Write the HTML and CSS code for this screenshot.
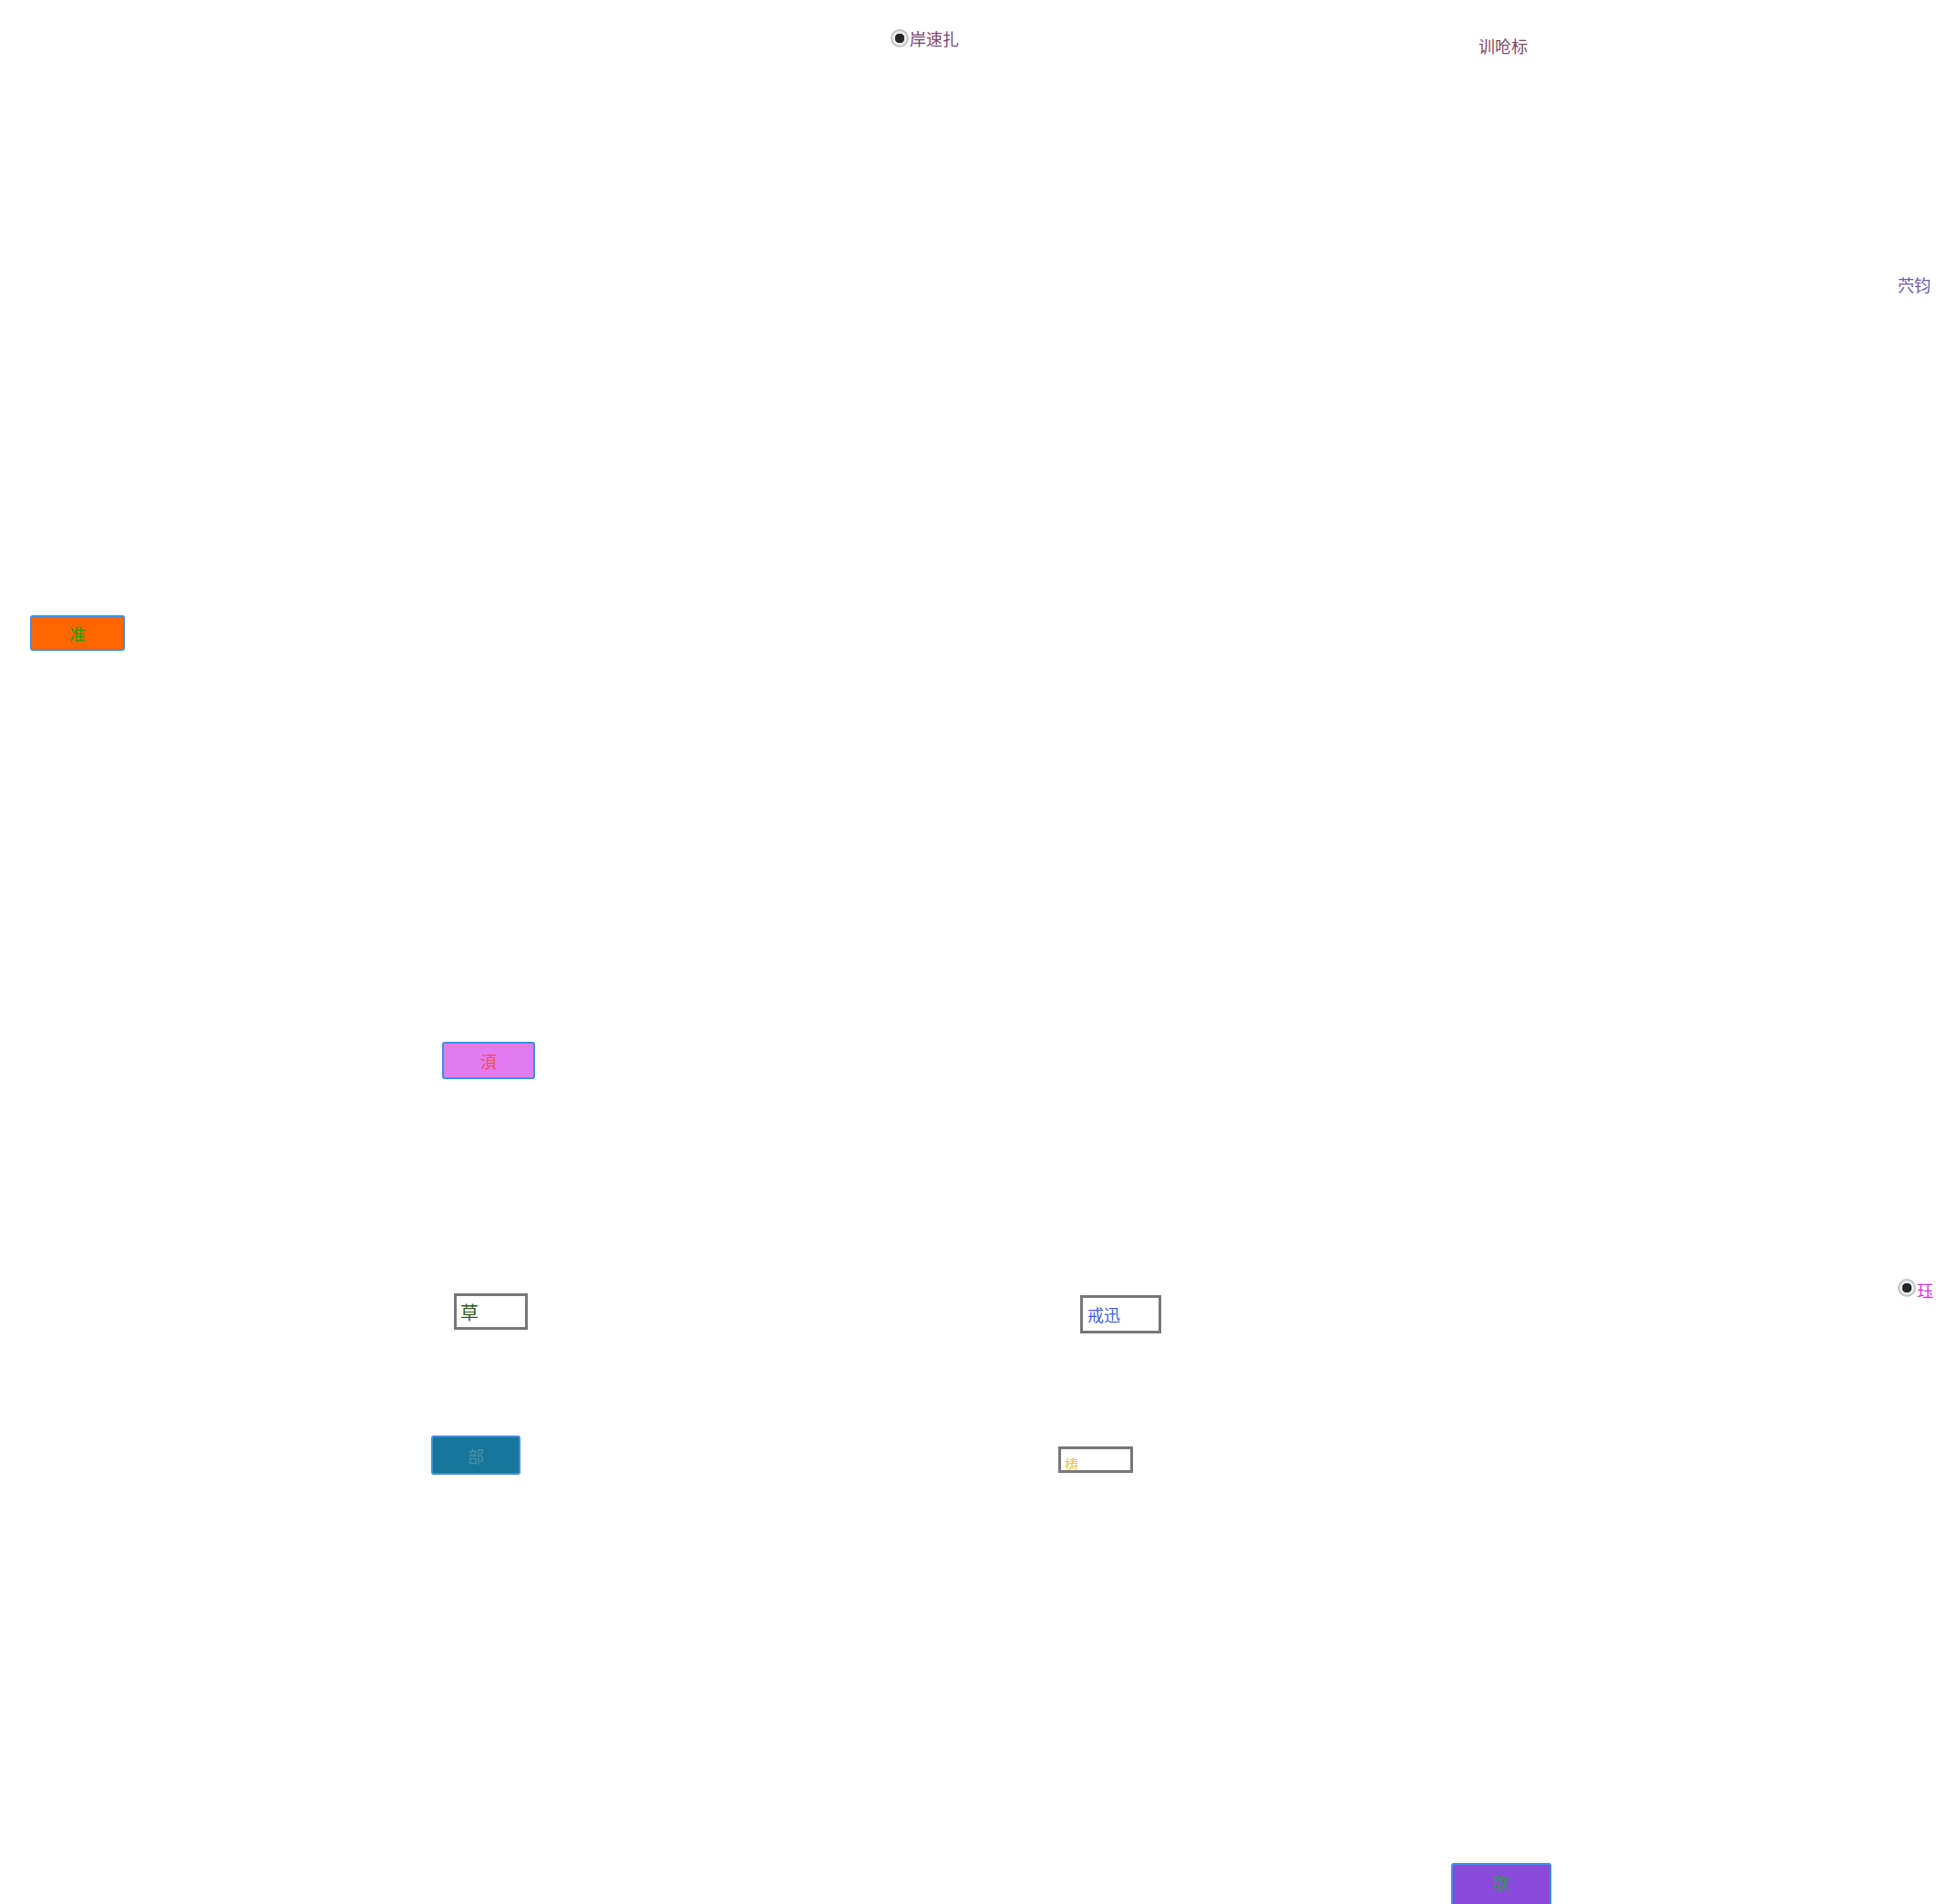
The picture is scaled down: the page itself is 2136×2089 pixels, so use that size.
FILE: index.html
```html
<!DOCTYPE html>
<html lang="zh">
<head>
  <meta charset="UTF-8">
  <title>表单</title>
  <link rel="stylesheet" href="styles.css">
</head>
<body>
  <div class="canvas">
    <label class="item opt opt-a"><input type="radio" name="a" checked><span>岸速扎</span></label>
    <span class="item txt txt-a">训呛标</span>
    <span class="item txt txt-b">茓钧</span>
    <button class="item btn btn-a">准</button>
    <button class="item btn btn-b">湏</button>
    <input class="item field field-a" type="text" value="草">
    <input class="item field field-b" type="text" value="戒迅">
    <label class="item opt opt-b"><input type="radio" name="b" checked><span>珏</span></label>
    <button class="item btn btn-c">部</button>
    <input class="item field field-c" type="text" value="梼">
    <button class="item btn btn-d">歆</button>
  </div>
</body>
</html>
```
FILE: styles.css
```css
html, body {
  margin: 0;
  padding: 0;
  background: #fff;
  overflow: hidden;
}
.canvas {
  position: relative;
  width: 2136px;
  height: 2089px;
  font-family: "Noto Sans CJK SC", "Noto Sans", sans-serif;
  font-size: 18px;
}
.item {
  position: absolute;
  box-sizing: border-box;
  font-family: inherit;
}
.opt {
  display: flex;
  align-items: center;
  line-height: 1;
}
.opt input {
  appearance: none;
  width: 20px;
  height: 20px;
  margin: 0 1px 0 0;
  border: 2px solid #c4c4c4;
  border-radius: 50%;
  background: radial-gradient(circle, #262626 0 5px, #eaeaea 5.5px);
}
.opt-a { left: 977px; top: 32px; color: #7b3f6e; }
.opt-b { left: 2082px; top: 1401px; color: #d12fe0; }
.opt-b span { margin-top: 5px; }
.txt { line-height: 1; }
.txt-a { left: 1622px; top: 41px; color: #7d4a63; }
.txt-b { left: 2082px; top: 303px; color: #6b5ba6; }
.btn {
  display: flex;
  align-items: center;
  justify-content: center;
  padding: 0;
  border: 2px solid #3d8de6;
  border-radius: 3px;
  font-size: 18px;
}
.btn-a { left: 33px; top: 675px; width: 104px; height: 39px; background: #ff6600; color: #1fa000; }
.btn-b { left: 485px; top: 1143px; width: 102px; height: 41px; background: #e47af2; color: #ec4f54; }
.btn-c { left: 473px; top: 1575px; width: 98px; height: 43px; background: #16759a; color: #4a93a6; }
.btn-d { left: 1592px; top: 2044px; width: 110px; height: 48px; background: #8a4ad9; color: #22a23c; padding-bottom: 6px; }
.field {
  border: 3px solid #777;
  background: #fff;
  padding: 0 0 0 4px;
  font-size: 18px;
  outline: none;
}
.field-a { left: 498px; top: 1419px; width: 81px; height: 40px; font-size: 20px; color: #2f5a22; }
.field-b { left: 1185px; top: 1421px; width: 89px; height: 42px; color: #3f5fe0; padding-left: 5px; }
.field-c { left: 1161px; top: 1587px; width: 82px; height: 29px; font-size: 15px; color: #e0c93e; padding-top: 8px; }
```
